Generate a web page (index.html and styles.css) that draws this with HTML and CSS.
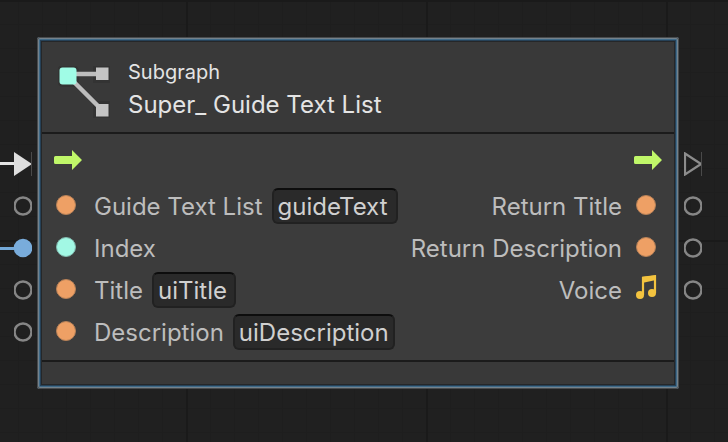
FILE: index.html
```html
<!DOCTYPE html>
<html lang="en">
<head>
<meta charset="utf-8">
<title>Subgraph node</title>
<link rel="stylesheet" href="styles.css">
</head>
<body>
<svg class="defs" width="0" height="0" aria-hidden="true">
  <symbol id="flow" viewBox="0 0 28 20"><path d="M1.5 6H18V0L28 10L18 20V14H1.5Q0 14 0 12.500V7.500Q0 6 1.500 6Z" fill="#c0f769"/></symbol>
  <symbol id="ring" viewBox="0 0 18 20"><circle cx="9" cy="10" r="8.500" fill="none" stroke="#868686" stroke-width="2.500"/></symbol>
</svg>
<main class="canvas">
  <div class="ports ports-in">
    <div class="port"><svg width="32" height="24" viewBox="0 0 32 24"><path d="M0 11.500H14" stroke="#e4e4e4" stroke-width="3"/><path d="M14 0L32 12L14 24Z" fill="#dedede"/><path d="M31.500 0V24" stroke="#4a4a4a"/></svg></div>
    <div class="port"><svg width="18" height="20"><use href="#ring"/></svg></div>
    <div class="port"><svg width="32" height="20" viewBox="0 0 32 20"><path d="M0 10.500H16" stroke="#74a9d8" stroke-width="3"/><circle cx="23" cy="10" r="9.300" fill="#79acdb"/></svg></div>
    <div class="port"><svg width="18" height="20"><use href="#ring"/></svg></div>
    <div class="port"><svg width="18" height="20"><use href="#ring"/></svg></div>
  </div>
  <section class="node">
    <header class="head">
      <svg class="head-icon" width="52" height="52" viewBox="0 0 52 52">
        <g fill="none" stroke="#333" stroke-width="6"><rect x="2" y="2" width="16" height="16" rx="3"/><rect x="38" y="2" width="12" height="12"/><rect x="38" y="38" width="12" height="12"/></g>
        <path d="M10 8H44M10 10L44 44" fill="none" stroke="#bdbdbd" stroke-width="4.500"/>
        <path d="M38 1.500H50.500V14H38ZM38 38H50.500V50.500H38Z" fill="#c4c4c4"/>
        <rect x="1.500" y="1.500" width="17" height="17" rx="3" fill="#a0fce6"/>
      </svg>
      <div>
        <p class="kind">Subgraph</p>
        <h1 class="title">Super_ Guide Text List</h1>
      </div>
    </header>
    <div class="body">
      <div class="side">
        <div class="row flow"><svg width="28" height="20"><use href="#flow"/></svg></div>
        <div class="row"><i class="dot"></i><label for="guide">Guide Text List</label><input class="field w-guide" id="guide" value="guideText"></div>
        <div class="row"><i class="dot mint"></i><span>Index</span></div>
        <div class="row"><i class="dot"></i><label for="ttl">Title</label><input class="field w-title" id="ttl" value="uiTitle"></div>
        <div class="row"><i class="dot"></i><label for="desc">Description</label><input class="field w-desc" id="desc" value="uiDescription"></div>
      </div>
      <div class="side out">
        <div class="row flow"><svg width="28" height="20"><use href="#flow"/></svg></div>
        <div class="row"><span>Return Title</span><i class="dot"></i></div>
        <div class="row"><span>Return Description</span><i class="dot"></i></div>
        <div class="row"><span>Voice</span><svg class="note" width="22" height="24" viewBox="0 0 22 24"><path d="M7 20V3L19 1.500V18" fill="none" stroke="#f3c33f" stroke-width="2.200"/><path d="M6 1.800L20 0V5L6 8Z" fill="#f3c33f"/><circle cx="4" cy="20" r="4" fill="#f3c33f"/><circle cx="16" cy="18" r="4" fill="#f3c33f"/></svg></div>
      </div>
    </div>
    <footer class="foot"></footer>
  </section>
  <div class="ports ports-out">
    <div class="port"><svg width="18" height="24" viewBox="0 0 18 24"><path d="M1 1.500L17 12L1 22.500Z" fill="none" stroke="#8c8c8c" stroke-width="2.200"/><path d="M17.500 0V24" stroke="#4a4a4a"/></svg></div>
    <div class="port"><svg width="18" height="20"><use href="#ring"/></svg></div>
    <div class="port"><svg width="18" height="20"><use href="#ring"/></svg></div>
    <div class="port"><svg width="18" height="20"><use href="#ring"/></svg></div>
  </div>
</main>
</body>
</html>
```
FILE: styles.css
```css
* { box-sizing: border-box; margin: 0; padding: 0; }
body {
  min-height: 100vh;
  background-color: #202020;
  background-image:
    linear-gradient(90deg, #1a1a1a 2px, transparent 2px),
    linear-gradient(#1a1a1a 2px, transparent 2px),
    linear-gradient(90deg, #1e1e1e 1px, transparent 1px),
    linear-gradient(#1e1e1e 1px, transparent 1px);
  background-size: 240px 240px, 240px 240px, 24px 24px, 24px 24px;
  background-position: 186px 0, 0 0, 18px 0, 0 0;
  color: #bdbdbd;
  font: 400 24px/30px Inter, sans-serif;
}
.defs { position: absolute; }
svg { display: block; flex: none; }
.canvas {
  display: grid;
  grid-template-columns: 37px 1fr 49px;
  align-items: start;
  padding-top: 37px;
}
.ports { padding-top: 106px; }
.port { display: flex; align-items: center; height: 42px; }
.ports-in .port { justify-content: flex-end; padding-right: 5px; }
.ports-out .port { padding-left: 5px; }
.node {
  padding: 5px;
  border-radius: 3px;
  background: #3c3c3c;
  box-shadow:
    inset 0 0 0 1px #484b4d,
    inset 0 0 0 2px #74828c,
    inset 0 0 0 3px #3f6a88,
    inset 0 0 0 4px #264157,
    inset 0 0 0 5px #252729;
}
.head {
  display: flex;
  gap: 18px;
  height: 92px;
  padding: 16px 16px 0;
  background: #393939;
  border-bottom: 2px solid #1b1b1b;
  color: #e4e4e4;
}
.head-icon { margin-top: 8px; }
.kind { font-size: 20px; line-height: 28px; }
.title { font-size: 24px; line-height: 38px; font-weight: 400; }
.body {
  display: flex;
  justify-content: space-between;
  padding: 8px 12px 7px;
}
.row { display: flex; align-items: center; height: 42px; white-space: nowrap; }
.row.flow { align-items: flex-start; height: 43px; padding-top: 8px; }
.out .row { justify-content: flex-end; }
.row label, .row span { padding-top: 2px; }
.dot {
  flex: none;
  width: 20px;
  height: 20px;
  margin: 0 18px 2px 2px;
  border-radius: 50%;
  background: #eea065;
  border: 1px solid #b78158;
}
.dot.mint { background: #a2f8e4; border-color: #81b9ae; }
.out .dot { margin: 0 6px 2px 14px; }
.note { margin: 0 4px 6px 14px; }
.field {
  height: 36px;
  margin-left: 9px;
  padding: 1px 4px 0;
  border: 2px solid #212121;
  border-top-color: #0d0d0d;
  border-radius: 6px;
  background: #2a2a2a;
  color: #d0d0d0;
  font: inherit;
}
.w-guide { width: 126px; }
.w-title { width: 84px; }
.w-desc { width: 162px; }
.foot { height: 24px; border-top: 2px solid #1b1b1b; background: #393939; }
```
